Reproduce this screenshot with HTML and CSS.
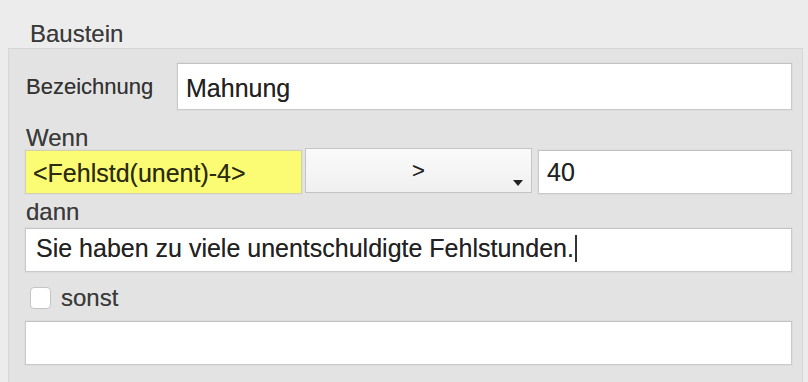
FILE: index.html
```html
<!DOCTYPE html>
<html lang="de">
<head>
<meta charset="utf-8">
<title>Baustein</title>
<link rel="stylesheet" href="styles.css">
</head>
<body>
<div class="legend">Baustein</div>
<section class="group">
  <div class="row-name">
    <label class="lbl-small">Bezeichnung</label>
    <div class="field name-field">Mahnung</div>
  </div>
  <div class="lbl lbl-wenn">Wenn</div>
  <div class="row-cond">
    <div class="field cond-field">&lt;Fehlstd(unent)-4&gt;</div>
    <div class="select">
      <span class="op">&gt;</span>
      <svg class="arrow" width="10" height="6" viewBox="0 0 10 6"><path d="M0 0H10L5 6Z" fill="#222"/></svg>
    </div>
    <div class="field num-field">40</div>
  </div>
  <div class="lbl lbl-dann">dann</div>
  <div class="field text-field">Sie haben zu viele unentschuldigte Fehlstunden.<span class="caret"></span></div>
  <div class="row-sonst">
    <span class="check"></span>
    <span class="lbl-sonst">sonst</span>
  </div>
  <div class="field text-field else-field"></div>
</section>
</body>
</html>
```
FILE: styles.css
```css
html, body {
  margin: 0;
  padding: 0;
}
body {
  background: #ececec;
  font-family: "Liberation Sans", Arial, sans-serif;
  color: #2a2a2a;
  width: 808px;
  height: 382px;
  overflow: hidden;
  text-shadow: 0 0 0.5px rgba(0, 0, 0, 0.45);
}
.legend {
  height: 48px;
  box-sizing: border-box;
  padding: 22px 0 0 30px;
  font-size: 24px;
  line-height: 24px;
  color: #3a3a3a;
}
.group {
  margin: 0 5px 0 8px;
  background: #e3e3e3;
  border: 1px solid #d6d6d6;
  border-bottom: none;
  padding: 14px 10px 0 16px;
  height: 334px;
  box-sizing: border-box;
  overflow: hidden;
}
.row-name {
  display: flex;
  align-items: center;
  height: 47px;
}
.lbl-small {
  width: 151px;
  padding-left: 1px;
  font-size: 22px;
  color: #333;
}
.field {
  background: #fff;
  border: 1px solid #cacaca;
  border-top-color: #c2c2c2;
  box-shadow: 0 0 0 1px rgba(0, 0, 0, 0.025);
  box-sizing: border-box;
  font-size: 25px;
  color: #222;
  display: flex;
  align-items: center;
  padding-left: 8px;
}
.name-field {
  width: 615px;
  height: 47px;
  padding-top: 4px;
}
.lbl {
  font-size: 24px;
  line-height: 24px;
  color: #3a3a3a;
  padding-left: 1px;
}
.lbl-wenn {
  margin-top: 16px;
}
.row-cond {
  display: flex;
  height: 44px;
}
.cond-field {
  width: 277px;
  background: #fbfb74;
  border-color: #d2d2b0;
  padding-left: 7px;
  padding-top: 3px;
  color: #2b2b10;
}
.select {
  width: 227px;
  margin-left: 3px;
  margin-top: -2px;
  height: 45px;
  box-sizing: border-box;
  border: 1px solid #c4c4c4;
  background: linear-gradient(#fafafa, #f0f0f0);
  display: flex;
  align-items: center;
  justify-content: center;
  position: relative;
}
.op {
  font-size: 22px;
  color: #222;
}
.arrow {
  position: absolute;
  right: 8px;
  bottom: 6px;
}
.num-field {
  width: 254px;
  margin-left: 6px;
}
.lbl-dann {
  margin-top: 6px;
  margin-bottom: 4px;
}
.text-field {
  width: 767px;
  height: 44px;
  padding-left: 10px;
  padding-bottom: 4px;
}
.caret {
  display: inline-block;
  width: 0;
  height: 27px;
  border-left: 2px solid #333;
  margin-left: 1px;
}
.row-sonst {
  display: flex;
  align-items: center;
  height: 25px;
  margin-top: 13px;
  padding-left: 5px;
}
.check {
  width: 21px;
  height: 22px;
  background: #fff;
  border: 1px solid #c4c4c4;
  border-radius: 4px;
  box-sizing: border-box;
}
.lbl-sonst {
  font-size: 24px;
  margin-left: 10px;
  color: #3a3a3a;
}
.else-field {
  margin-top: 11px;
}
```
